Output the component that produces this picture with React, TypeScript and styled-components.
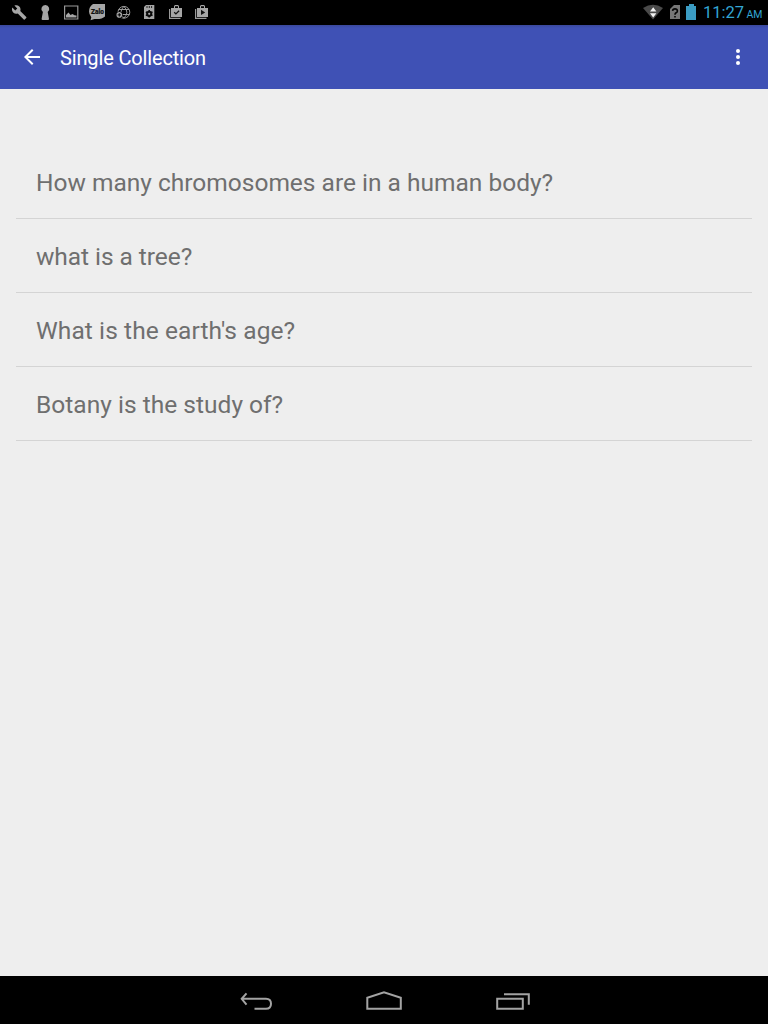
import React from 'react';
import styled, { createGlobalStyle } from 'styled-components';

const GlobalStyle = createGlobalStyle`
  * { box-sizing: border-box; }
  body { margin: 0; background: #eeeeee; font-family: Roboto, "Liberation Sans", sans-serif; }
`;

const Screen = styled.div`
  display: flex;
  flex-direction: column;
  width: 768px;
  height: 1024px;
  background: #eeeeee;
  overflow: hidden;
`;

const StatusBar = styled.header`
  display: flex;
  justify-content: space-between;
  height: 25px;
  flex: none;
  padding: 0 5px 0 6px;
  background: #000;
`;

const StatusGroup = styled.div`
  display: flex;
  align-items: center;
`;

const StatusIcon = styled.svg<{ $width?: number }>`
  display: block;
  width: ${({ $width }) => $width ?? 26}px;
  height: 25px;
  fill: #a6a6a6;
`;

const Clock = styled.time`
  display: flex;
  align-items: baseline;
  margin-left: 5px;
  width: 60px;
  padding-top: 2px;
  color: #33a6d3;
  font-size: 16.5px;
  font-weight: 400;
  line-height: 24px;
  letter-spacing: 0;
  white-space: nowrap;
`;

const Meridiem = styled.span`
  margin-left: 2.5px;
  font-size: 10.5px;
  letter-spacing: -0.1px;
`;

const AppBar = styled.nav`
  display: flex;
  align-items: center;
  height: 64px;
  flex: none;
  padding: 0 18px 0 20px;
  color: #fff;
  background: linear-gradient(#3a489c 0, #3f51b5 3px);
`;

const IconButton = styled.button<{ $width: number }>`
  display: flex;
  justify-content: center;
  width: ${({ $width }) => $width}px;
  padding: 0;
  border: 0;
  background: none;
  color: inherit;
`;

const Title = styled.h1`
  flex: 1;
  margin: 2px 0 0 16px;
  font-size: 20px;
  font-weight: 400;
  line-height: 24px;
  letter-spacing: -0.15px;
`;

const Content = styled.main`
  flex: 1;
  padding: 56px 16px 0;
`;

const QuestionList = styled.ul`
  margin: 0;
  padding: 0;
  list-style: none;
`;

const Question = styled.li<{ $tracking: number }>`
  height: 74px;
  padding: 2px 20px 0;
  border-bottom: 1px solid #d4d4d4;
  color: #6f6f6f;
  font-size: 24.5px;
  line-height: 72px;
  letter-spacing: ${({ $tracking }) => $tracking}px;
`;

const NavigationBar = styled.footer`
  display: flex;
  justify-content: center;
  height: 48px;
  flex: none;
  background: #000;
`;

const NavButton = styled.button`
  width: 128px;
  padding: 0;
  border: 0;
  background: none;
`;

const NavIcon = styled.svg`
  display: block;
  width: 128px;
  height: 48px;
  fill: none;
  stroke: #a3a3a3;
  stroke-width: 2;
`;

const questions = [
  { text: 'How many chromosomes are in a human body?', tracking: 0 },
  { text: 'what is a tree?', tracking: -0.06 },
  { text: 'What is the earth\'s age?', tracking: 0.09 },
  { text: 'Botany is the study of?', tracking: 0.02 },
];

function Notifications() {
  return (
    <StatusGroup>
      <StatusIcon viewBox="0 0 26 25">
        <path transform="translate(5.3 4.5) scale(.66)" d="M22.7 19l-9.1-9.1c.9-2.3.4-5-1.5-6.9-2-2-5-2.4-7.4-1.3L9 6 6 9 1.6 4.7C.4 7.1.9 10.1 2.9 12.1c1.9 1.9 4.6 2.4 6.9 1.5l9.1 9.1c.4.4 1 .4 1.4 0l2.3-2.3c.5-.4.5-1.1.1-1.4z" />
      </StatusIcon>
      <StatusIcon viewBox="0 0 26 25">
        <path d="M13.3 5a3.9 3.9 0 0 1 2.4 7l1.3 7q0 1-1 1h-5.400q-1 0-1-1l1.300-7a3.900 3.900 0 0 1 2.400-7z" />
      </StatusIcon>
      <StatusIcon viewBox="0 0 26 25">
        <path fill="none" stroke="#999" strokeWidth="1.2" d="M6.600 6h13.200v13H6.600z" />
        <path d="M8 17.500V15l2.500-2.500 2 2.500 2-1 2 1.300 2 .2v2z" />
      </StatusIcon>
      <StatusIcon viewBox="0 0 26 25">
        <path d="M9 4h12v12.500Q18 19.500 10.500 19L6.500 20.200l.8-3Q5 14.500 5 11.500 5 6.500 9 4z" />
        <text x="7" y="14.300" fill="#111" stroke="#111" strokeWidth=".2" fontFamily="Roboto" fontWeight="800" fontSize="6.500" textLength="12.800" lengthAdjust="spacingAndGlyphs">Zalo</text>
      </StatusIcon>
      <StatusIcon viewBox="0 0 26 25">
        <g fill="none" stroke="#999" strokeWidth="1">
          <circle cx="13.900" cy="12.300" r="5.900" />
          <path d="M8.700 9.500h10.400M8 14.500h11.600M13.900 6.400q-6 5.900 0 11.800M13.900 6.400q6 5.900 0 11.800" />
        </g>
        <circle cx="9.300" cy="14.900" r="3.500" fill="#000" />
        <circle cx="9.300" cy="14.900" r="2.800" />
        <path stroke="#000" strokeWidth="1" d="M9.300 13.200v3.400M7.600 14.900H11" />
      </StatusIcon>
      <StatusIcon viewBox="0 0 26 25">
        <path d="M10 5h8.300v14H8V7z" />
        <path d="M11 6v2M13.300 6v2M15.600 6v2" stroke="#222" strokeWidth="1" />
        <circle cx="13.200" cy="13.800" r="2.100" fill="none" stroke="#0a0a0a" strokeWidth="2" />
        <path stroke="#0a0a0a" strokeWidth="1.500" d="M13.200 10v1.500M13.200 16.100v1.500M9.900 11.900l1.300.800M15.200 14.900l1.300.800M9.900 15.700l1.300-.800M15.200 12.700l1.300-.800" />
      </StatusIcon>
      <StatusIcon viewBox="0 0 26 25">
        <path fill="none" stroke="#999" strokeWidth="1.200" d="M7.600 9v9.300h10.900" />
        <path d="M9 8h3V6l1-1h3l1 1v2h3v9H9zM13 8h3V6.200h-3z" />
        <path fill="none" stroke="#111" strokeWidth="1.300" d="M12.200 12.200l1.700 1.700 3.200-3.200" />
      </StatusIcon>
      <StatusIcon viewBox="0 0 26 25">
        <path fill="none" stroke="#999" strokeWidth="1.200" d="M7.600 9v9.300h10.900" />
        <path d="M9 8h3V6l1-1h3l1 1v2h3v9H9zM13 8h3V6.200h-3z" />
        <path fill="#111" d="M13 9.800l4.200 2.600-4.200 2.600z" />
      </StatusIcon>
    </StatusGroup>
  );
}

function SystemStatus() {
  return (
    <StatusGroup>
      <StatusIcon $width={24} viewBox="0 0 24 25">
        <path fill="#4a4a4a" d="M2 8q10-6.500 20 0L12 19.500z" />
        <path fill="#f2f2f2" d="M12.200 7.200l3.200 4.200H9zM9 13.200h6.400l-3.200 4.200z" />
      </StatusIcon>
      <StatusIcon $width={18} viewBox="0 0 18 25">
        <path fill="#777" d="M9 5h6v14H5V9z" />
        <path fill="none" stroke="#050505" strokeWidth="1.600" d="M7.600 10.900q.2-2 2.400-2t2.400 2q0 1.100-1.300 1.900-1.100.7-1.100 1.900M10 16v1.600" />
      </StatusIcon>
      <StatusIcon $width={15} viewBox="0 0 15 25">
        <path fill="#3b9cc3" d="M6 4h5v2h2v14H3V6h3z" />
      </StatusIcon>
      <Clock>11:27<Meridiem>AM</Meridiem></Clock>
    </StatusGroup>
  );
}

export default function App() {
  return (
    <Screen>
      <GlobalStyle />
      <StatusBar>
        <Notifications />
        <SystemStatus />
      </StatusBar>
      <AppBar>
        <IconButton $width={24} aria-label="Back">
          <svg width="24" height="24" viewBox="0 0 24 24" fill="currentColor">
            <path d="M20 11H7.830l5.590-5.590L12 4l-8 8 8 8 1.410-1.410L7.830 13H20v-2z" />
          </svg>
        </IconButton>
        <Title>Single Collection</Title>
        <IconButton $width={24} aria-label="More options">
          <svg width="24" height="24" viewBox="0 0 24 24" fill="currentColor">
            <circle cx="12" cy="6" r="2" />
            <circle cx="12" cy="12" r="2" />
            <circle cx="12" cy="18" r="2" />
          </svg>
        </IconButton>
      </AppBar>
      <Content>
        <QuestionList>
          {questions.map(({ text, tracking }) => (
            <Question key={text} $tracking={tracking}>{text}</Question>
          ))}
        </QuestionList>
      </Content>
      <NavigationBar>
        <NavButton aria-label="Back">
          <NavIcon viewBox="0 0 128 48">
            <path d="M49 22.800h25q5 0 5 5t-5 5H62.500M49.500 22.800M54.500 17.300L49.700 22.800l4.800 5.800" />
          </NavIcon>
        </NavButton>
        <NavButton aria-label="Home">
          <NavIcon viewBox="0 0 128 48">
            <path d="M47.300 32.800V21.800L64 16.200l16.800 5.600v11z" />
          </NavIcon>
        </NavButton>
        <NavButton aria-label="Recent apps">
          <NavIcon viewBox="0 0 128 48">
            <path d="M49.200 22.800h25.600v10H49.200zM56 18.200h24.800v10.600" />
          </NavIcon>
        </NavButton>
      </NavigationBar>
    </Screen>
  );
}
